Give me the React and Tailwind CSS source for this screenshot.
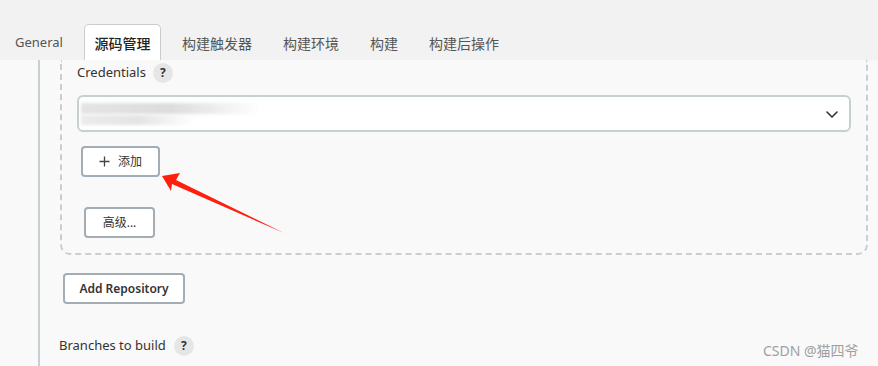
import React from 'react';

const tabs = ['General', '源码管理', '构建触发器', '构建环境', '构建', '构建后操作'];

const Help = ({ className = '' }) => (
  <span className={`inline-flex items-center justify-center w-[20px] h-[20px] rounded-full bg-[#e6e6e6] text-[#333] text-[12px] font-bold ${className}`}>?</span>
);

const App = () => {
  return (
    <div
      className="relative h-[366px] w-[878px] overflow-hidden bg-[#f9f9f9] text-[#333]"
      style={{ fontFamily: '"Noto Sans", "Noto Sans CJK SC", sans-serif' }}
    >
      {/* tab bar */}
      <div className="h-[60px] bg-[#f2f2f2] flex items-end pl-[5px] gap-[11px]">
        {tabs.map((t, i) =>
          i === 1 ? (
            <div key={t} className="h-[36px] w-[77px] flex items-center justify-center pt-[2px] bg-white border border-b-0 border-[#c9cdd0] rounded-t-[5px] text-[14px] font-medium text-[#222]">
              {t}
            </div>
          ) : (
            <div key={t} className={`h-[36px] px-[10px] pt-[2px] flex items-center text-[#555] ${i === 0 ? 'text-[13px]' : 'text-[14px]'}`}>
              {t}
            </div>
          )
        )}
      </div>

      {/* content */}
      <div className="ml-[38px] border-l-2 border-[#c7cfd3] pl-[20px] h-[306px]">
        <div className="mr-[10px] border-2 border-t-0 border-dashed border-[#c7cfd3] rounded-b-[10px] pl-[15px] pr-[15px] pb-[15px] h-[195px]">
          <div className="flex items-center gap-[7px] h-[25px] pt-[1px]">
            <span className="text-[13px] text-[#333]">Credentials</span>
            <Help />
          </div>

          {/* select */}
          <div className="mt-[10px] h-[37px] bg-white border-2 border-[#c7cfd3] rounded-[6px] flex items-center justify-between pr-[10px] relative">
            <div className="ml-[2px] flex flex-col gap-[1px]">
              <div className="h-[11px] w-[180px] bg-gradient-to-r from-[#e4e4e4] via-[#dcdcdc] to-transparent blur-[1.5px]" />
              <div className="h-[10px] w-[115px] bg-gradient-to-r from-[#ebebeb] via-[#e4e4e4] to-transparent blur-[1.5px]" />
            </div>
            <svg width="14" height="14" viewBox="0 0 14 14" fill="none" stroke="#333" strokeWidth="1.6" strokeLinecap="round" strokeLinejoin="round">
              <path d="M2 5 L7 10 L12 5" />
            </svg>
          </div>

          {/* add button */}
          <div className="mt-[14px] ml-[4px] w-[79px] h-[31px] bg-white border-2 border-[#a3adb5] rounded-[4px] flex items-center justify-center gap-[8px] text-[12px] text-[#333]">
            <svg width="11" height="11" viewBox="0 0 11 11" stroke="#444" strokeWidth="1.3">
              <path d="M5.5 0.5 V10.5 M0.5 5.5 H10.5" />
            </svg>
            <span>添加</span>
          </div>

          {/* advanced */}
          <div className="mt-[30px] ml-[7px] w-[71px] h-[31px] bg-white border-2 border-[#a3adb5] rounded-[4px] flex items-center justify-center text-[12px] text-[#333]">
            高级...
          </div>
        </div>

        <div className="mt-[18px] ml-[3px] w-[122px] h-[31px] bg-white border-2 border-[#a3adb5] rounded-[4px] flex items-center justify-center text-[12px] font-semibold text-[#333]">
          Add Repository
        </div>

        <div className="mt-[32px] flex items-center gap-[8px] -ml-[1px]">
          <span className="text-[13px] text-[#333]">Branches to build</span>
          <Help />
        </div>
      </div>

      {/* red arrow annotation */}
      <svg className="absolute left-0 top-0 pointer-events-none" width="878" height="366">
        <polygon points="162,176 180,173 176,180 284,233 172,184 171,191" fill="#ff1f0f" />
      </svg>

      {/* watermark */}
      <div className="absolute left-[763px] top-[340px] text-[14px] text-[#a0a0a0]">CSDN @猫四爷</div>
    </div>
  );
};

export default App;
